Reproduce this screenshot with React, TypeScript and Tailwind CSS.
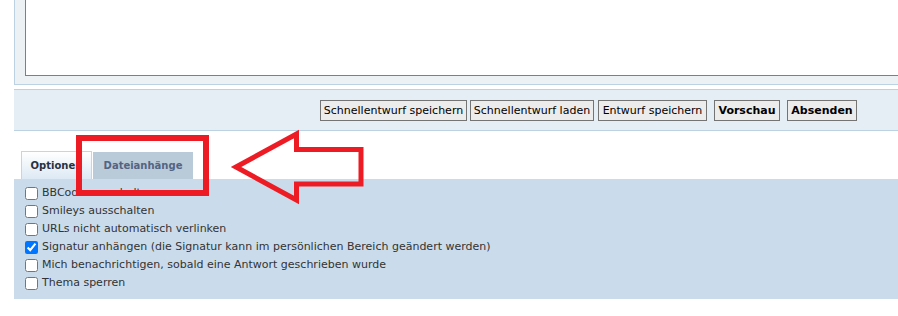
import React from "react";

const buttons = [
  { label: "Schnellentwurf speichern", w: "w-[147px]", bold: false, ml: "ml-0" },
  { label: "Schnellentwurf laden", w: "w-[124px]", bold: false, ml: "ml-[3px]" },
  { label: "Entwurf speichern", w: "w-[109px]", bold: false, ml: "ml-[4px]" },
  { label: "Vorschau", w: "w-[66px]", bold: true, ml: "ml-[7px]" },
  { label: "Absenden", w: "w-[70px]", bold: true, ml: "ml-[7px]" },
];

const options = [
  { label: "BBCode ausschalten", checked: false },
  { label: "Smileys ausschalten", checked: false },
  { label: "URLs nicht automatisch verlinken", checked: false },
  { label: "Signatur anhängen (die Signatur kann im persönlichen Bereich geändert werden)", checked: true },
  { label: "Mich benachrichtigen, sobald eine Antwort geschrieben wurde", checked: false },
  { label: "Thema sperren", checked: false },
];

export default function App() {
  return (
    <div className="relative w-[898px] h-[316px] overflow-hidden bg-white font-['DejaVu_Sans',Verdana,sans-serif] text-[11px]">
      <div className="ml-[14px] w-[890px]">
        {/* Message panel */}
        <div className="h-[85px] bg-[#ecf1f3] border-x border-b border-[#bcd2e2]">
          <div className="ml-[10px] h-[76px] bg-white border-l border-b border-[#2f96d8]" />
        </div>

        {/* Submit buttons */}
        <div className="mt-[4px] h-[42px] bg-[#e6eef5] border-y border-[#bcd2e2] flex items-center justify-end pr-[47px]">
          {buttons.map((b) => (
            <button
              key={b.label}
              className={`${b.w} ${b.ml} h-[21px] bg-[#ececec] border border-[#747474] text-black leading-none ${b.bold ? "font-bold" : "font-normal"}`}
            >
              {b.label}
            </button>
          ))}
        </div>

        {/* Tabs */}
        <div className="mt-[20px] h-[28px] flex items-end pl-[7px] text-[10px]">
          <div className="w-[71px] h-[28px] border-x border-t border-[#c3d6e6] bg-gradient-to-b from-white to-[#dde9f4] flex items-center justify-center font-bold text-[#28313f]">
            Optionen
          </div>
          <div className="w-[100px] h-[27px] ml-px bg-[#b9cad9] flex items-center justify-center font-bold text-[#536482]">
            Dateianhänge
          </div>
        </div>

        {/* Options panel */}
        <div className="h-[120px] bg-[#cadceb] pt-[5px] pl-[11px]">
          {options.map((o) => (
            <label key={o.label} className="h-[18px] flex items-center text-[#333]">
              <input type="checkbox" defaultChecked={o.checked} className="m-0 w-[13px] h-[13px]" />
              <span className="ml-[4px]">{o.label}</span>
            </label>
          ))}
        </div>
      </div>

      {/* Red annotation */}
      <svg className="absolute top-0 left-0 pointer-events-none" width="898" height="316" viewBox="0 0 898 316">
        <rect x="79" y="138" width="127" height="55" fill="none" stroke="#ed1c24" strokeWidth="6" />
        <polygon
          points="236,167 296.5,134 296.5,149.5 361,149.5 361,184 296.5,184 296.5,200"
          fill="none"
          stroke="#ed1c24"
          strokeWidth="5"
          strokeLinejoin="miter"
        />
      </svg>
    </div>
  );
}
